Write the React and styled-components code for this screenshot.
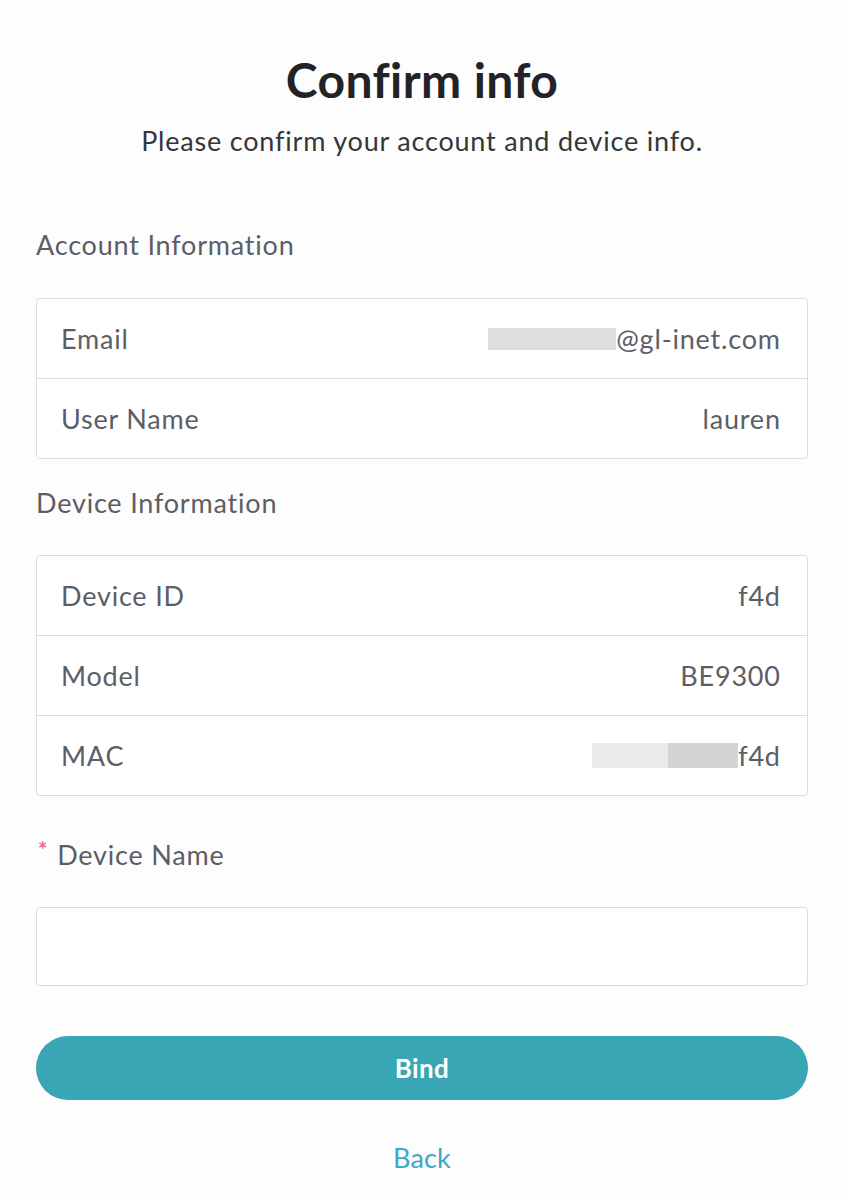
import React from 'react';
import styled, { createGlobalStyle } from 'styled-components';

const colors = {
  title: '#222326',
  text: '#35363a',
  label: '#5c5e66',
  border: '#dcdce0',
  teal: '#38a6b5',
  link: '#3ea6c9',
  required: '#e4688a',
  mask: '#dedede',
};

const GlobalStyle = createGlobalStyle`
  body {
    margin: 0;
    background: #fdfdfd;
    font-family: Lato, "Open Sans", sans-serif;
  }
`;

const Page = styled.div`
  padding: 50px 38px 30px 36px;
  display: flex;
  flex-direction: column;
  letter-spacing: 0.8px;
`;

const Title = styled.h1`
  margin: 0;
  text-align: center;
  font-size: 48px;
  font-weight: 700;
  letter-spacing: 0.4px;
  color: ${colors.title};
  line-height: 60px;
`;

const Subtitle = styled.p`
  margin: 15px 0 0;
  text-align: center;
  font-size: 27px;
  color: ${colors.text};
  line-height: 32px;
`;

const SectionTitle = styled.h2`
  margin: ${props => props.$top || 0}px 0 0;
  font-size: 27px;
  font-weight: 400;
  color: ${colors.label};
  line-height: 32px;
`;

const Card = styled.div`
  margin-top: ${props => props.$top || 0}px;
  border: 1px solid ${colors.border};
  border-radius: 4px;
  background: #fff;
`;

const Row = styled.div`
  height: 79px;
  padding: 0 27px 0 24px;
  display: flex;
  align-items: center;
  justify-content: space-between;
  font-size: 27px;
  color: ${colors.label};
  & + & {
    border-top: 1px solid ${colors.border};
  }
`;

const Value = styled.span`
  display: flex;
  align-items: center;
  margin-right: -0.8px;
`;

// grey block over hidden parts of a value
const Mask = styled.span`
  display: inline-block;
  height: ${props => props.$height || 22}px;
  width: ${props => props.$width}px;
  background: ${props => props.$bg || colors.mask};
`;

const FieldLabel = styled.label`
  margin-top: 43px;
  display: flex;
  align-items: flex-start;
  gap: 9px;
  font-size: 27px;
  color: ${colors.label};
  line-height: 32px;
`;

const Star = styled.span`
  margin-left: 2px;
  color: ${colors.required};
  font-size: 22px;
  font-weight: 700;
  line-height: 22px;
`;

const Input = styled.input`
  margin-top: 36px;
  height: 79px;
  box-sizing: border-box;
  border: 1px solid ${colors.border};
  border-radius: 4px;
  background: #fff;
  padding: 0 24px;
  font: inherit;
  font-size: 27px;
  outline: none;
`;

const Button = styled.button`
  margin-top: 50px;
  height: 64px;
  border: none;
  border-radius: 32px;
  background: ${colors.teal};
  color: #fff;
  font: inherit;
  font-size: 26px;
  font-weight: 700;
  letter-spacing: 0.4px;
  cursor: pointer;
`;

const BackLink = styled.a`
  margin-top: 42px;
  align-self: center;
  font-size: 27px;
  line-height: 32px;
  letter-spacing: 0.2px;
  color: ${colors.link};
  text-decoration: none;
  cursor: pointer;
`;

export default function App() {
  return (
    <>
      <GlobalStyle />
      <Page>
        <Title>Confirm info</Title>
        <Subtitle>Please confirm your account and device info.</Subtitle>

        <SectionTitle $top={72}>Account Information</SectionTitle>
        <Card $top={37}>
          <Row>
            <span>Email</span>
            <Value>
              <Mask $width={128} />
              @gl-inet.com
            </Value>
          </Row>
          <Row>
            <span>User Name</span>
            <Value>lauren</Value>
          </Row>
        </Card>

        <SectionTitle $top={28}>Device Information</SectionTitle>
        <Card $top={36}>
          <Row>
            <span>Device ID</span>
            <Value>f4d</Value>
          </Row>
          <Row>
            <span>Model</span>
            <Value>BE9300</Value>
          </Row>
          <Row>
            <span>MAC</span>
            <Value>
              <Mask $width={76} $height={25} $bg="#ebebeb" />
              <Mask $width={70} $height={25} $bg="#d4d4d4" />
              f4d
            </Value>
          </Row>
        </Card>

        <FieldLabel>
          <Star>*</Star>
          Device Name
        </FieldLabel>
        <Input type="text" />

        <Button>Bind</Button>
        <BackLink>Back</BackLink>
      </Page>
    </>
  );
}
